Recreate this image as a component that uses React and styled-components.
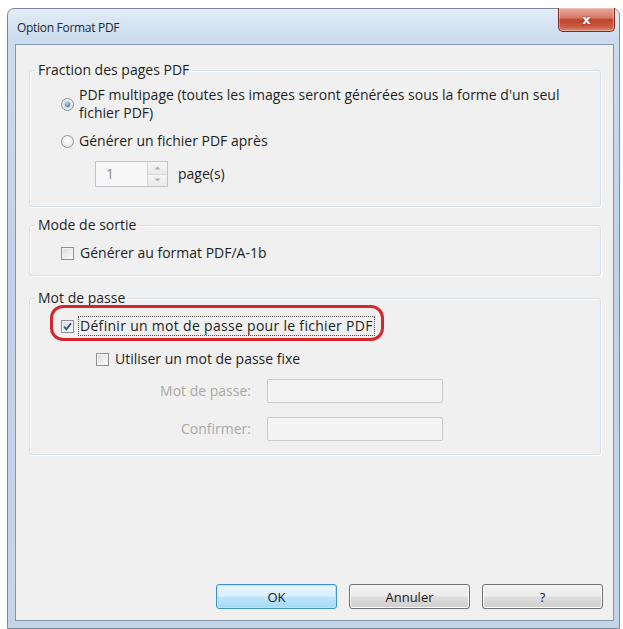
import React from "react";
import styled, { createGlobalStyle, css } from "styled-components";

const GlobalStyle = createGlobalStyle`
  html, body { margin: 0; padding: 0; background: #ffffff; }
  body {
    font-family: "Open Sans", "Noto Sans", sans-serif;
    font-size: 14px;
    color: #1e1e1e;
  }
`;

const Page = styled.div`
  padding: 8px 0 0 7px;
  height: 629px;
  box-sizing: border-box;
  overflow: hidden;
`;

const Window = styled.div`
  width: 613px;
  height: 621px;
  box-sizing: border-box;
  border: 1px solid #7a8a9c;
  border-radius: 7px 7px 0 0;
  background: linear-gradient(180deg, #e2ecf6 0%, #cbdcee 5%, #bfd2e7 40%, #c3d5e9 100%);
  display: flex;
  flex-direction: column;
  padding: 0 5px 7px 7px;
`;

const TitleBar = styled.div`
  height: 35px;
  display: flex;
  align-items: flex-start;
  flex-shrink: 0;
`;

const Title = styled.div`
  margin-top: 10px;
  padding-left: 2px;
  font-size: 12px;
  letter-spacing: -0.3px;
  line-height: 18px;
  color: #1b2838;
`;

const CloseButton = styled.div`
  margin: -1px -1px 0 auto;
  width: 57px;
  height: 24px;
  box-sizing: border-box;
  border: 1px solid #7a2a20;
  border-top: none;
  border-radius: 0 0 5px 5px;
  background: linear-gradient(180deg, #e8aa9e 0%, #d77a67 42%, #c2432d 52%, #c95a42 80%, #dc8a74 100%);
  box-shadow: inset 0 0 0 1px rgba(255, 220, 210, 0.45);
  display: flex;
  align-items: center;
  justify-content: center;
  color: #ffffff;
  font-family: "DejaVu Sans", sans-serif;
  font-weight: bold;
  font-size: 13px;
  text-shadow: 0 0 2px #6b1f14;
`;

const Client = styled.div`
  flex: 1;
  background: #f0f0f0;
  border: 1px solid #8596aa;
  display: flex;
  flex-direction: column;
  padding: 16px 0 11px 0;
`;

const Groups = styled.div`
  display: flex;
  flex-direction: column;
  padding: 0 12px 0 13px;
`;

const Group = styled.fieldset`
  margin: ${(p) => p.$top || 0}px 0 0 0;
  padding: 0;
  min-width: 0;
  border: 1px solid #d5dfe5;
  border-radius: 3px;
  box-shadow: inset 1px 1px 0 #ffffff, 1px 1px 0 #ffffff;
`;

const Legend = styled.legend`
  margin-left: 5px;
  padding: 0 3px;
  font-size: 14px;
  line-height: 18px;
  color: #1e1e1e;
`;

const GroupBody = styled.div`
  display: flex;
  flex-direction: column;
  padding: ${(p) => p.$pt}px 0 ${(p) => p.$pb}px 31px;
`;

const Row = styled.div`
  display: flex;
  align-items: center;
  gap: ${(p) => (p.$gap != null ? p.$gap : 6)}px;
  margin-top: ${(p) => p.$top || 0}px;
  margin-left: ${(p) => p.$indent || 0}px;
  line-height: 18px;
  position: relative;
  ${(p) =>
    p.$marked &&
    css`
      &::before {
        content: "";
        position: absolute;
        left: -11px;
        top: -12px;
        width: 334px;
        height: 36px;
        box-sizing: border-box;
        border: 3px solid #d4262c;
        border-radius: 13px;
        pointer-events: none;
      }
    `}
`;

const Label = styled.span`
  color: ${(p) => (p.$disabled ? "#a9a9a9" : "#1e1e1e")};
  white-space: nowrap;
  ${(p) =>
    p.$focused &&
    css`
      letter-spacing: 0.3px;
      outline: 1px dotted #4a4a4a;
      outline-offset: 0px;
      padding: 0 1px;
      margin-left: -1px;
    `}
`;

const RadioCircle = styled.span`
  width: 13px;
  height: 13px;
  box-sizing: border-box;
  border-radius: 50%;
  border: 1px solid #8f9396;
  background: radial-gradient(circle at 50% 40%, #ffffff 0%, #eeeeee 55%, #d5d7d8 100%);
  flex-shrink: 0;
  display: flex;
  align-items: center;
  justify-content: center;
  &::after {
    content: "";
    width: 5px;
    height: 5px;
    border-radius: 50%;
    display: ${(p) => (p.$checked ? "block" : "none")};
    background: radial-gradient(circle at 40% 35%, #b9dcf4 0%, #5f8fc0 55%, #2f5b8a 100%);
    box-shadow: 0 0 1px 1px rgba(120, 150, 180, 0.45);
  }
`;

const CheckSquare = styled.span`
  width: 13px;
  height: 13px;
  box-sizing: border-box;
  border: 1px solid #8f8f8f;
  background: linear-gradient(135deg, #d9d9d9 0%, #ececec 50%, #fbfbfb 100%);
  box-shadow: inset 0 0 0 1px #f4f4f4;
  flex-shrink: 0;
  display: flex;
  align-items: center;
  justify-content: center;
`;

const Check = ({ checked }) => (
  <CheckSquare>
    {checked && (
      <svg width="11" height="11" viewBox="0 0 11 11">
        <path d="M2 5.6 L4.4 8.2 L9 2.4" fill="none" stroke="#3d5596" strokeWidth="1.9" />
      </svg>
    )}
  </CheckSquare>
);

const SpinBox = styled.div`
  margin-left: 34px;
  width: 73px;
  height: 26px;
  box-sizing: border-box;
  border: 1px solid #c2c4c8;
  background: #f7f7f7;
  display: flex;
`;

const SpinValue = styled.div`
  flex: 1;
  padding-left: 10px;
  line-height: 24px;
  color: #8a8a8a;
`;

const SpinButtons = styled.div`
  width: 19px;
  display: flex;
  flex-direction: column;
  border-left: 1px solid #d6d6d6;
`;

const SpinHalf = styled.div`
  flex: 1;
  display: flex;
  align-items: center;
  justify-content: center;
  background: linear-gradient(180deg, #f6f6f6, #e9e9e9);
  & + & { border-top: 1px solid #d6d6d6; }
`;

const Arrow = ({ up }) => (
  <svg width="7" height="4" viewBox="0 0 7 4">
    <path d={up ? "M0.5 3.5 L3.5 0.5 L6.5 3.5 Z" : "M0.5 0.5 L3.5 3.5 L6.5 0.5 Z"} fill="#b0b0b0" />
  </svg>
);

const FieldGrid = styled.div`
  display: grid;
  grid-template-columns: 190px 176px;
  column-gap: 16px;
  row-gap: 14px;
  align-items: center;
  margin-top: 11px;
  line-height: 18px;
`;

const FieldLabel = styled.span`
  text-align: right;
  color: #a9a9a9;
  white-space: nowrap;
`;

const TextField = styled.div`
  height: 24px;
  box-sizing: border-box;
  border: 1px solid #c6c8cc;
  border-radius: 2px;
  background: #f4f4f4;
`;

const ButtonBar = styled.div`
  margin-top: auto;
  display: flex;
  justify-content: flex-end;
  gap: 12px;
  padding-right: 10px;
`;

const Button = styled.div`
  width: 121px;
  height: 25px;
  box-sizing: border-box;
  border-radius: 3px;
  display: flex;
  align-items: center;
  justify-content: center;
  font-size: 13px;
  color: #1a1a1a;
  ${(p) =>
    p.$default
      ? css`
          border: 1px solid #3d94c6;
          background: linear-gradient(180deg, #eaf6fd 0%, #d9f0fc 48%, #bee6fd 52%, #a7d9f5 100%);
          box-shadow: inset 0 0 0 1px #b8e4f7;
        `
      : css`
          border: 1px solid #707070;
          background: linear-gradient(180deg, #f2f2f2 0%, #ebebeb 48%, #dddddd 52%, #cfcfcf 100%);
          box-shadow: inset 0 0 0 1px #fafafa;
        `}
`;

export default function App() {
  return (
    <>
      <GlobalStyle />
      <Page>
        <Window>
          <TitleBar>
            <Title>Option Format PDF</Title>
            <CloseButton>x</CloseButton>
          </TitleBar>
          <Client>
            <Groups>
              <Group>
                <Legend>Fraction des pages PDF</Legend>
                <GroupBody $pt={7} $pb={19}>
                  <Row $gap={5}>
                    <RadioCircle $checked />
                    <Label>
                      PDF multipage (toutes les images seront générées sous la forme d'un seul
                      <br />
                      fichier PDF)
                    </Label>
                  </Row>
                  <Row $gap={5} $top={10}>
                    <RadioCircle />
                    <Label>Générer un fichier PDF après</Label>
                  </Row>
                  <Row $gap={10} $top={11}>
                    <SpinBox>
                      <SpinValue>1</SpinValue>
                      <SpinButtons>
                        <SpinHalf>
                          <Arrow up />
                        </SpinHalf>
                        <SpinHalf>
                          <Arrow />
                        </SpinHalf>
                      </SpinButtons>
                    </SpinBox>
                    <Label>page(s)</Label>
                  </Row>
                </GroupBody>
              </Group>

              <Group $top={9}>
                <Legend>Mode de sortie</Legend>
                <GroupBody $pt={10} $pb={13}>
                  <Row>
                    <Check />
                    <Label>Générer au format PDF/A-1b</Label>
                  </Row>
                </GroupBody>
              </Group>

              <Group $top={13}>
                <Legend>Mot de passe</Legend>
                <GroupBody $pt={10} $pb={13}>
                  <Row $marked>
                    <Check checked />
                    <Label $focused>Définir un mot de passe pour le fichier PDF</Label>
                  </Row>
                  <Row $top={15} $indent={35}>
                    <Check />
                    <Label>Utiliser un mot de passe fixe</Label>
                  </Row>
                  <FieldGrid>
                    <FieldLabel>Mot de passe:</FieldLabel>
                    <TextField />
                    <FieldLabel>Confirmer:</FieldLabel>
                    <TextField />
                  </FieldGrid>
                </GroupBody>
              </Group>
            </Groups>

            <ButtonBar>
              <Button $default>OK</Button>
              <Button>Annuler</Button>
              <Button>?</Button>
            </ButtonBar>
          </Client>
        </Window>
      </Page>
    </>
  );
}
